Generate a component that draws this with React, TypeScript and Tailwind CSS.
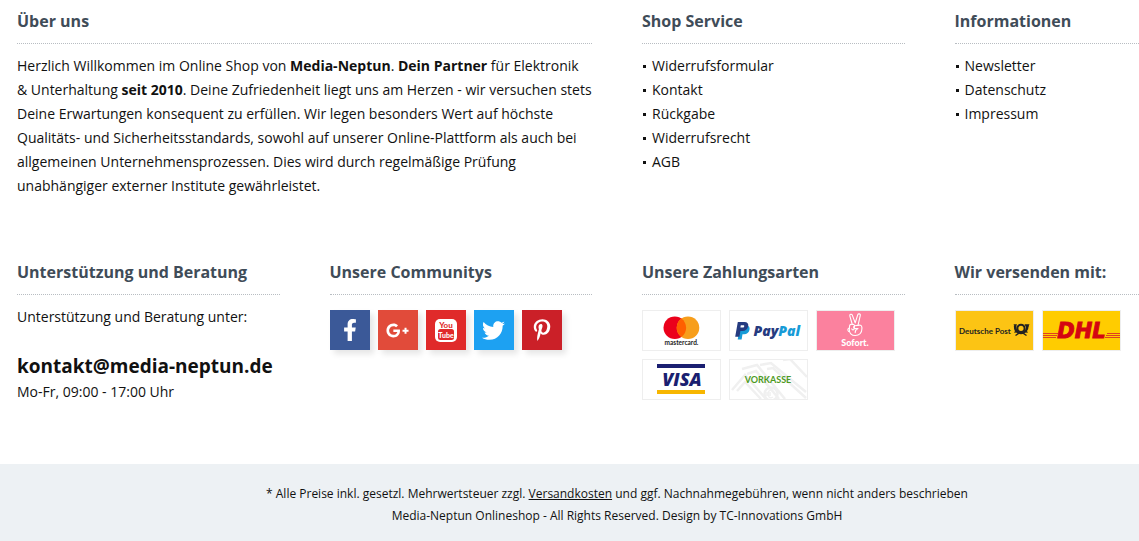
import type { ReactNode } from "react";
import { FaFacebookF, FaGooglePlusG, FaPinterestP, FaTwitter } from "react-icons/fa";

function Section({ title, className = "", children }: { title: string; className?: string; children: ReactNode }) {
  return (
    <section className={className}>
      <h2 className="border-b border-dotted border-[#b8bdc2] pb-2.5 text-base font-bold text-[#3f4c58]">{title}</h2>
      <div className="pt-2.5">{children}</div>
    </section>
  );
}

function LinkList({ items }: { items: string[] }) {
  return (
    <ul>
      {items.map((item) => (
        <li key={item} className="flex items-center gap-1.5">
          <span className="ml-px size-[3px] bg-[#111]" />
          <a href="#">{item}</a>
        </li>
      ))}
    </ul>
  );
}

function YouTubeMark() {
  return (
    <svg viewBox="0 0 40 40" className="size-10" role="img" aria-label="YouTube">
      <rect x="9" y="9" width="22" height="23" rx="5" fill="#fff" />
      <rect x="12" y="19" width="16" height="11" rx="2.5" fill="#e02a2a" />
      <g fontFamily="Lato, sans-serif" fontWeight="900" textAnchor="middle">
        <text x="20" y="17.5" fontSize="8" fill="#e02a2a">You</text>
        <text x="20" y="27.5" fontSize="7" fill="#fff">Tube</text>
      </g>
    </svg>
  );
}

const socials = [
  { name: "Facebook", tone: "bg-[#3b5998]", icon: <FaFacebookF size={22} /> },
  { name: "Google Plus", tone: "bg-[#e14b3a]", icon: <FaGooglePlusG size={23} /> },
  { name: "YouTube", tone: "bg-[#e02a2a]", icon: <YouTubeMark /> },
  { name: "Twitter", tone: "bg-[#1da1f2]", icon: <FaTwitter size={23} /> },
  { name: "Pinterest", tone: "bg-[#cb2028]", icon: <FaPinterestP size={22} /> },
];

function Badge({ label, tone = "bg-white", children }: { label: string; tone?: string; children: ReactNode }) {
  return (
    <li className={`h-[41px] w-[79px] border border-[#eeeeee] ${tone}`}>
      <svg viewBox="1 1 77 39" className="size-full" role="img" aria-label={label}>
        {children}
      </svg>
    </li>
  );
}

function Mastercard() {
  return (
    <Badge label="Mastercard">
      <circle cx="32.8" cy="17.8" r="11.3" fill="#eb001b" />
      <circle cx="46" cy="17.8" r="11.3" fill="#f79e1b" />
      <path d="M39.4 8.6a11.3 11.3 0 0 1 0 18.4a11.3 11.3 0 0 1 0-18.4z" fill="#ff5f00" />
      <text x="39.5" y="34.5" textAnchor="middle" fontFamily="Lato, sans-serif" fontWeight="700" fontSize="6.5" fill="#222">mastercard.</text>
    </Badge>
  );
}

function PayPal() {
  return (
    <Badge label="PayPal">
      <path d="M11.2 15.5h6.2c2.6 0 3.6 1.9 3.1 4.3-.6 3-2.6 4.4-5.4 4.4h-1.6l-.9 5.2H8.7z" fill="#179bd7" />
      <path d="M8.8 12h6.6c3 0 4.3 1.8 3.8 4.3-.6 3.2-2.8 4.7-5.8 4.7h-2l-1 5.8H6.2z" fill="#253b80" />
      <path d="M11.8 15.2h2.3c1.1 0 1.3.6 1.1 1.2-.2 1-1 1.2-2 1.2h-1.8z" fill="#fff" />
      <text x="24.5" y="26" fontFamily="'Open Sans', sans-serif" fontStyle="italic" fontWeight="800" fontSize="14" fill="#253b80">
        Pay<tspan fill="#179bd7">Pal</tspan>
      </text>
    </Badge>
  );
}

function Sofort() {
  return (
    <Badge label="Sofort" tone="bg-[#fb819e]">
      <g fill="none" stroke="#fff" strokeWidth="1.1" strokeLinecap="round" strokeLinejoin="round">
        <path d="M36.3 14.5 33.8 5.8c-.4-1.5 1.9-2.2 2.5-.7l2.9 7.8 2.6-8.2c.5-1.5 2.9-.9 2.5.7l-2.3 10" />
        <path d="M36.3 14.5c-1.5-.7-2.6.1-2.7 1.4l-.3 3.2c-.2 4 2.2 6.4 6 6.4 4 0 6.6-2.7 6.6-6.7v-1.4c0-2.2-2.6-2.7-3.9-2l-3.3.4c-1.6.3-1.4 2.6.2 2.7l3.1.1c-2 .8-2.9 2-2.8 4" />
        <path d="M36.3 14.5c1.3-.5 2.3.3 2.2 1.5l-.3 2.7c-.2 1.5-2.2 1.6-2.4.1M33.5 18c-1.8.2-2.2 2-.9 3.5" />
      </g>
      <text x="39" y="35.5" textAnchor="middle" fontFamily="Lato, sans-serif" fontWeight="900" fontSize="9" fill="#fff">Sofort.</text>
    </Badge>
  );
}

function Visa() {
  return (
    <Badge label="Visa">
      <path d="M15 5h48v4H15z" fill="#1a1f71" />
      <path d="M15 31h48v4H15z" fill="#f7b600" />
      <text x="40" y="26.5" textAnchor="middle" fontFamily="'Open Sans', sans-serif" fontStyle="italic" fontWeight="800" fontSize="18" fill="#1a1f71">VISA</text>
    </Badge>
  );
}

function Vorkasse() {
  return (
    <Badge label="Vorkasse">
      <g fill="none" stroke="#f0f0f0" strokeWidth="2.5">
        <path d="M3 31 16 16 37 40M8 32 16 23 32 40M13 10 28 6 56 40M18 15 27 12 50 40M31 6 42 4 77 33M38 10 44 9 77 39M54 1 61 0 78 18" />
        <circle cx="42" cy="35" r="6.5" />
        <path d="M44 32c-3-2-5 0-5 3s2 5 5 3M37 34h5M37 36h5" strokeWidth="1.3" />
      </g>
      <text x="39" y="24" textAnchor="middle" fontFamily="Lato, sans-serif" fontWeight="700" fontSize="9" fill="#4d9a1e">VORKASSE</text>
    </Badge>
  );
}

function DeutschePost() {
  return (
    <Badge label="Deutsche Post" tone="bg-[#fcc414]">
      <text x="4" y="24" fontFamily="Lato, sans-serif" fontWeight="700" fontSize="8" fill="#222">Deutsche Post</text>
      <g fill="none" stroke="#222">
        <circle cx="66" cy="18.3" r="3.6" strokeWidth="2" />
        <path d="M60 15.5c0 5 2.5 7.5 6 7.5s6.5-2.5 6.5-7.5" strokeWidth="2.4" />
        <path d="M60.5 25.5l4.5-3M71.5 25.5l-4.5-3M59.5 22.5l3-2M72.5 22.5l-3-2" strokeWidth="1.5" />
      </g>
      <path d="M58.5 14.3h3.5l-1.5 3.5zM69.5 14.3h5l-2.5 5z" fill="#222" />
    </Badge>
  );
}

function Dhl() {
  return (
    <Badge label="DHL" tone="bg-[#ffcc00]">
      <path d="M1 23.5h15M1 25.5h14M1 27.5h13M65 23.5h13M64 25.5h14M63 27.5h15" stroke="#e04020" strokeWidth="1.2" />
      <text x="39.5" y="28" textAnchor="middle" fontFamily="'DejaVu Sans', sans-serif" fontStyle="italic" fontWeight="700" fontSize="21" fill="#d40511" stroke="#d40511" strokeWidth="1">DHL</text>
    </Badge>
  );
}

export default function App() {
  return (
    <div className="overflow-x-hidden bg-white font-['Open_Sans',sans-serif] text-sm/6 text-[#111]">
      <footer className="min-w-[1234px]">
        <div className="mx-auto grid max-w-[1234px] grid-cols-4 gap-x-[50px] px-[17px] pt-[9px] pb-[60px]">
          <Section title="Über uns" className="col-span-2 pb-[62px]">
            <p>
              Herzlich Willkommen im Online Shop von <strong>Media-Neptun</strong>. <strong>Dein Partner</strong> für
              Elektronik &amp; Unterhaltung <strong>seit 2010</strong>. Deine Zufriedenheit liegt uns am Herzen - wir
              versuchen stets Deine Erwartungen konsequent zu erfüllen. Wir legen besonders Wert auf höchste Qualitäts-
              und Sicherheitsstandards, sowohl auf unserer Online-Plattform als auch bei allgemeinen
              Unternehmensprozessen. Dies wird durch regelmäßige Prüfung unabhängiger externer Institute gewährleistet.
            </p>
          </Section>
          <Section title="Shop Service">
            <LinkList items={["Widerrufsformular", "Kontakt", "Rückgabe", "Widerrufsrecht", "AGB"]} />
          </Section>
          <Section title="Informationen">
            <LinkList items={["Newsletter", "Datenschutz", "Impressum"]} />
          </Section>

          <Section title="Unterstützung und Beratung">
            <p>Unterstützung und Beratung unter:</p>
            <a href="mailto:kontakt@media-neptun.de" className="mt-[23px] block text-[19px]/7 font-bold whitespace-nowrap">
              kontakt@media-neptun.de
            </a>
            <p>Mo-Fr, 09:00 - 17:00 Uhr</p>
          </Section>
          <Section title="Unsere Communitys">
            <ul className="flex gap-2 pt-[5px]">
              {socials.map(({ name, tone, icon }) => (
                <li key={name}>
                  <a
                    href="#"
                    aria-label={name}
                    className={`flex size-10 items-center justify-center text-white shadow-[4px_4px_6px_rgba(0,0,0,0.1)] ${tone}`}
                  >
                    {icon}
                  </a>
                </li>
              ))}
            </ul>
          </Section>
          <Section title="Unsere Zahlungsarten">
            <ul className="flex flex-wrap gap-2 pt-[5px]">
              <Mastercard />
              <PayPal />
              <Sofort />
              <Visa />
              <Vorkasse />
            </ul>
          </Section>
          <Section title="Wir versenden mit:">
            <ul className="flex flex-wrap gap-2 pt-[5px]">
              <DeutschePost />
              <Dhl />
            </ul>
          </Section>
        </div>
        <div className="bg-[#edf1f4] pt-[19px] pb-[14px] text-center text-xs/[22px]">
          <p>
            * Alle Preise inkl. gesetzl. Mehrwertsteuer zzgl.{" "}
            <a href="#" className="underline">Versandkosten</a> und ggf. Nachnahmegebühren, wenn nicht anders beschrieben
          </p>
          <p>Media-Neptun Onlineshop - All Rights Reserved. Design by TC-Innovations GmbH</p>
        </div>
      </footer>
    </div>
  );
}
